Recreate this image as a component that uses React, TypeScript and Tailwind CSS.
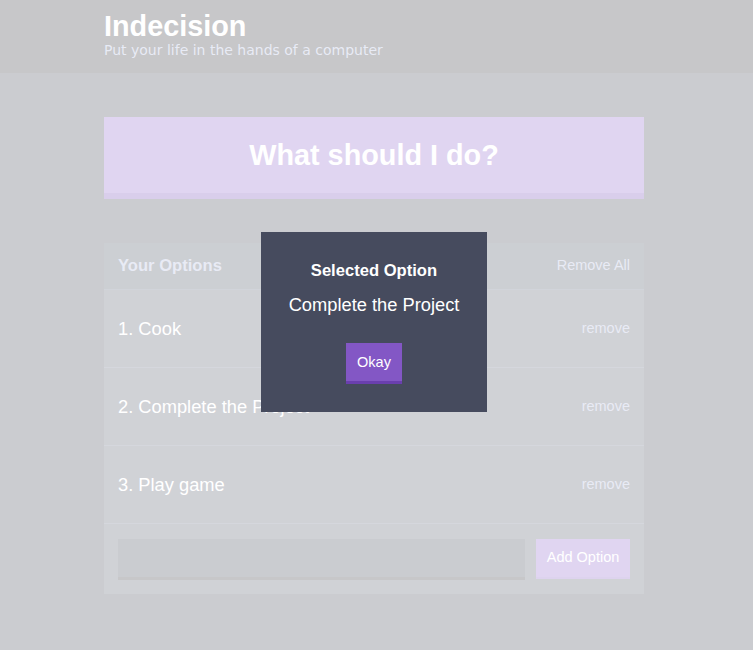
import React from "react";

const options = ["Cook", "Complete the Project", "Play game"];

const App = () => {
  return (
    <div className="min-h-screen bg-[#333745] font-['Liberation_Sans',Arial,sans-serif]">
      <header className="h-[73px] bg-[#20222b] pt-[10px]">
        <div className="ml-[104px] w-[540px]">
          <h1 className="text-[28.8px] font-bold leading-[32px] text-white">Indecision</h1>
          <h2 className="font-['DejaVu_Sans',sans-serif] text-[14px] leading-[17px] text-[#a5afd7]">
            Put your life in the hands of a computer
          </h2>
        </div>
      </header>

      <main className="ml-[104px] w-[540px] pt-[44px]">
        <button className="h-[82px] w-full border-b-[6px] border-[#6a3fae] bg-[#8357c5] pt-[2px] text-[28.8px] font-bold text-white">
          What should I do?
        </button>

        <div className="mt-[44px] bg-[#464b5e]">
          <div className="flex h-[47px] items-center justify-between border-b border-[#4a546b] bg-[#364051] px-[14px] text-[#a5afd7]">
            <h3 className="text-[16.6px] font-bold">Your Options</h3>
            <button className="text-[14.5px]">Remove All</button>
          </div>

          {options.map((option, i) => (
            <div
              key={option}
              className="flex h-[78px] items-center justify-between border-b border-[#5a6078] px-[14px]"
            >
              <p className="text-[18.3px] text-white">
                {i + 1}. {option}
              </p>
              <button className="text-[14.5px] text-[#a5afd7]">remove</button>
            </div>
          ))}

          <form className="flex gap-[11px] px-[14px] pb-[14px] pt-[15px]">
            <input
              type="text"
              className="h-[41px] flex-1 border-b-[3px] border-[#20222b] bg-[#2e3646] outline-none"
            />
            <button
              type="button"
              className="h-[40px] w-[94px] border-b-[2px] border-[#7a4fbd] bg-[#8357c5] text-[14.5px] text-white"
            >
              Add Option
            </button>
          </form>
        </div>
      </main>

      {/* modal overlay */}
      <div className="fixed inset-0 bg-white/75">
        <div className="absolute left-[261px] top-[232px] flex h-[180px] w-[226px] flex-col items-center bg-[#464b5e] pt-[29px] text-white">
          <h3 className="text-[16.6px] font-bold leading-[20px]">Selected Option</h3>
          <p className="mt-[13px] text-[18.3px] leading-[22px]">Complete the Project</p>
          <button className="mt-[27px] h-[41px] w-[56px] border-b-[3px] border-[#6a3fae] bg-[#8357c5] pt-[1px] text-[14.5px] text-white">
            Okay
          </button>
        </div>
      </div>
    </div>
  );
};

export default App;
